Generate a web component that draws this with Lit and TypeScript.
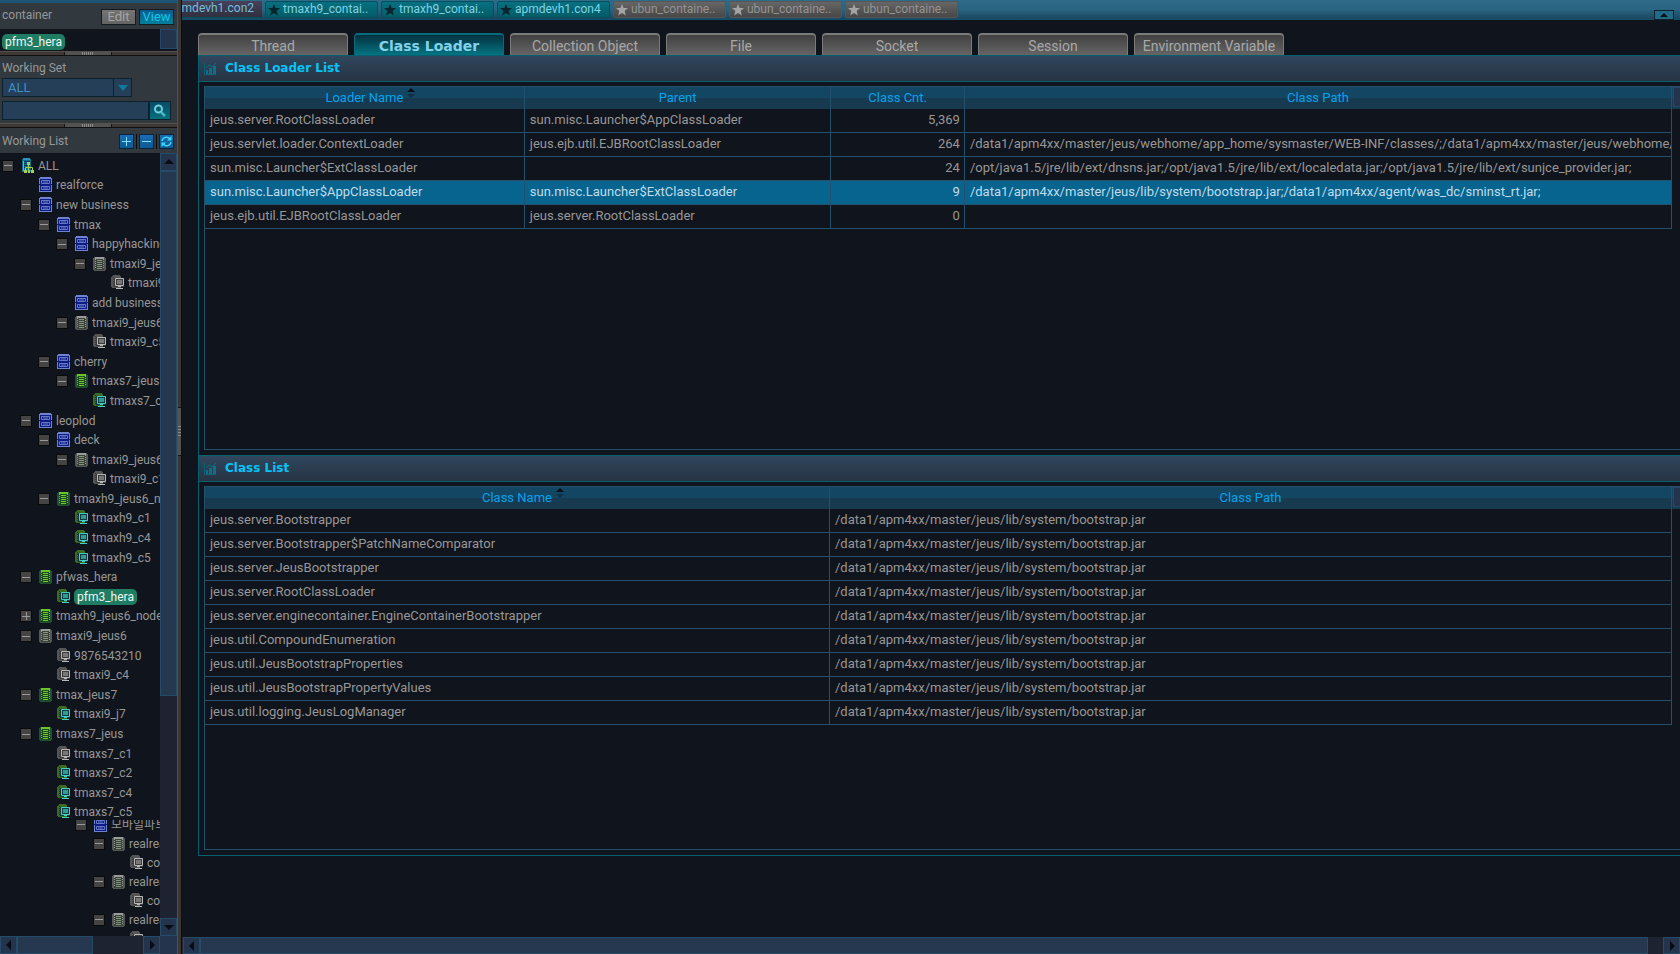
import { LitElement, html, css, svg } from 'lit';
import { customElement, state } from 'lit/decorators.js';
import { classMap } from 'lit/directives/class-map.js';

type Kind = 'root' | 'group' | 'node' | 'node-off' | 'con' | 'con-off';
type Row = [level: number, kind: Kind, name: string, toggle: string];

const TREE: Row[] = [
  [0, 'root', 'ALL', '-'],
  [1, 'group', 'realforce', ''],
  [1, 'group', 'new business', '-'],
  [2, 'group', 'tmax', '-'],
  [3, 'group', 'happyhacking', '-'],
  [4, 'node-off', 'tmaxi9_jeus6', '-'],
  [5, 'con-off', 'tmaxi9_c2', ''],
  [3, 'group', 'add business', ''],
  [3, 'node-off', 'tmaxi9_jeus6', '-'],
  [4, 'con-off', 'tmaxi9_c5', ''],
  [2, 'group', 'cherry', '-'],
  [3, 'node', 'tmaxs7_jeus', '-'],
  [4, 'con', 'tmaxs7_c1', ''],
  [1, 'group', 'leoplod', '-'],
  [2, 'group', 'deck', '-'],
  [3, 'node-off', 'tmaxi9_jeus6', '-'],
  [4, 'con-off', 'tmaxi9_c1', ''],
  [2, 'node', 'tmaxh9_jeus6_node', '-'],
  [3, 'con', 'tmaxh9_c1', ''],
  [3, 'con', 'tmaxh9_c4', ''],
  [3, 'con', 'tmaxh9_c5', ''],
  [1, 'node', 'pfwas_hera', '-'],
  [2, 'con', 'pfm3_hera', ''],
  [1, 'node', 'tmaxh9_jeus6_node', '+'],
  [1, 'node-off', 'tmaxi9_jeus6', '-'],
  [2, 'con-off', '9876543210', ''],
  [2, 'con-off', 'tmaxi9_c4', ''],
  [1, 'node', 'tmax_jeus7', '-'],
  [2, 'con', 'tmaxi9_j7', ''],
  [1, 'node', 'tmaxs7_jeus', '-'],
  [2, 'con-off', 'tmaxs7_c1', ''],
  [2, 'con', 'tmaxs7_c2', ''],
  [2, 'con', 'tmaxs7_c4', ''],
  [2, 'con', 'tmaxs7_c5', ''],
];

const MORE: Row[] = [
  [4, 'group', '모바일파트', '-'],
  [5, 'node-off', 'realreal', '-'],
  [6, 'con-off', 'con1', ''],
  [5, 'node-off', 'realreal', '-'],
  [6, 'con-off', 'con1', ''],
  [5, 'node-off', 'realreal', '-'],
  [6, 'con-off', 'con1', ''],
];

const OPEN: [string, string][] = [
  ['tmaxh9_contai..', 'on'],
  ['tmaxh9_contai..', 'on'],
  ['apmdevh1.con4', 'on'],
  ['ubun_containe..', 'off'],
  ['ubun_containe..', 'off'],
  ['ubun_containe..', 'off'],
];

const TABS = ['Thread', 'Class Loader', 'Collection Object', 'File', 'Socket', 'Session', 'Environment Variable'];

const LOADERS = [
  ['jeus.server.RootClassLoader', 'sun.misc.Launcher$AppClassLoader', '5,369', ''],
  ['jeus.servlet.loader.ContextLoader', 'jeus.ejb.util.EJBRootClassLoader', '264',
    '/data1/apm4xx/master/jeus/webhome/app_home/sysmaster/WEB-INF/classes/;/data1/apm4xx/master/jeus/webhome/'],
  ['sun.misc.Launcher$ExtClassLoader', '', '24',
    '/opt/java1.5/jre/lib/ext/dnsns.jar;/opt/java1.5/jre/lib/ext/localedata.jar;/opt/java1.5/jre/lib/ext/sunjce_provider.jar;'],
  ['sun.misc.Launcher$AppClassLoader', 'sun.misc.Launcher$ExtClassLoader', '9',
    '/data1/apm4xx/master/jeus/lib/system/bootstrap.jar;/data1/apm4xx/agent/was_dc/sminst_rt.jar;'],
  ['jeus.ejb.util.EJBRootClassLoader', 'jeus.server.RootClassLoader', '0', ''],
];

const BOOT = '/data1/apm4xx/master/jeus/lib/system/bootstrap.jar';
const CLASSES = [
  'jeus.server.Bootstrapper',
  'jeus.server.Bootstrapper$PatchNameComparator',
  'jeus.server.JeusBootstrapper',
  'jeus.server.RootClassLoader',
  'jeus.server.enginecontainer.EngineContainerBootstrapper',
  'jeus.util.CompoundEnumeration',
  'jeus.util.JeusBootstrapProperties',
  'jeus.util.JeusBootstrapPropertyValues',
  'jeus.util.logging.JeusLogManager',
];

const nodeIcon = (edge: string, top: string, body: string, line: string) => svg`
  <path d="M0 2h1V1h11v1h1v12h-1v1H1v-1H0z" fill=${edge}/>
  <path d="M2 1h9v13H2z" fill=${body}/><path d="M2 1h9v2H2z" fill=${top}/>
  <path d="M4 4.500h5M4 6.500h5M4 8.500h5M4 10.500h5M4 12.500h5" stroke=${line}/>
  <path d="M2.500 3v10M10.500 3v10" stroke=${top} stroke-dasharray="1 1"/>`;

const conIcon = (back: string, dark: string, frame: string, fill: string) => svg`
  <path d="M1 1h1V0h7v1h1v12H1v-1H0V2h1z" fill=${back}/>
  <path d="M2.500 2v10" stroke=${dark} stroke-dasharray="1 1"/>
  <path d="M3 3h10v9H3z" fill=${dark}/>
  <path d="M4.500 3.500h8v7h-8z" fill=${dark} stroke=${frame}/>
  <path d="M6 5h5v4H6z" fill=${fill}/>
  <path d="M7 11h3v1H7zM5 13h7v1H5z" fill=${frame}/>`;

const ICONS: Record<Kind, unknown> = {
  root: svg`
    <path d="M1 1h9v13H1z" fill="#0f6f92"/><path d="M2 0h7v2H2z" fill="#2c93b5"/>
    <path d="M2.500 3.500h6M2.500 5.500h6M2.500 7.500h4M2.500 9.500h3" stroke="#0b3550"/>
    <path d="M2.500 3v10" stroke="#59b9d4"/>
    <path d="M6 4h3v3H6zM3 12h3v3H3zM7 12h2v3H7zM10 12h3v3h-3z" fill="#a5d04f"/>
    <path d="M7.500 7v5M4.500 12V9.500h7V12" stroke="#a5d04f" fill="none"/>`,
  group: svg`
    <path d="M0 1h13v14H0z" fill="#0c1c84"/>
    <path d="M1 0h11v2H1zM0 1h1v6H0zM12 1h1v6h-1zM0 8h1v6H0zM12 8h1v6h-1zM0 14h13v1H0z" fill="#6f83cc"/>
    <path d="M2.500 3.500h8v3h-8zM4 5h5M2.500 9.500h8v3h-8zM4 11h5" stroke="#6478c4" fill="none"/>`,
  node: nodeIcon('#1f5232', '#6cc42a', '#1c4a1a', '#72c832'),
  'node-off': nodeIcon('#565656', '#9a9a9a', '#3a433a', '#84957e'),
  con: conIcon('#3c6a22', '#0f3c44', '#49cfc0', '#2f9c92'),
  'con-off': conIcon('#555555', '#3b3b3b', '#b8b8b8', '#777777'),
};

const icon = (k: Kind) => html`<svg class="ico" width="14" height="16" viewBox="0 0 14 16" aria-hidden="true">${ICONS[k]}</svg>`;
const star = html`<svg width="12" height="12" viewBox="0 0 12 12" aria-hidden="true"><path fill="currentColor" d="M6 0l1.600 4H12L8.600 7l1.300 4.500L6 9l-3.900 2.500L3.400 7 0 4h4.400z"/></svg>`;
const chart = html`<svg width="12" height="13" viewBox="0 0 12 13" aria-hidden="true">
  <path d="M0.500 1v11.500H12" stroke="#0a6076" fill="none"/>
  <path d="M2 8h2v4H2zM5 6h3v6H5zM9 4h3v8H9z" fill="#0a7288"/>
  <path d="M2 6l3-3 3 2 4-4" stroke="#0a6c82" fill="none"/></svg>`;
const sorter = html`<svg class="sort" width="8" height="10" viewBox="0 0 8 10" aria-hidden="true"><path d="M4 0l4 4H0z" fill="#0b1018"/><path d="M0 6h8L4 10z" fill="#123044"/></svg>`;
const TRI: Record<string, string> = {
  up: 'M5 2l5 5H0z', down: 'M0 3h10L5 8z', left: 'M7 0v10L2 5z', right: 'M3 0v10l5-5z',
};
const tri = (d: string) => html`<svg width="10" height="10" viewBox="0 0 10 10" aria-hidden="true"><path d=${TRI[d]} fill="#080c14"/></svg>`;

@customElement('app-root')
export class AppRoot extends LitElement {
  @state() private tab = 'Class Loader';
  @state() private loader = 3;

  static styles = css`
    :host {
      display: grid;
      grid-template-columns: 177px 5px minmax(0, 1fr);
      height: 100vh;
      overflow: hidden;
      background: #10141c;
      color: #979797;
      font: 12px/16px Roboto, "Noto Sans CJK KR", sans-serif;
    }
    * { box-sizing: border-box; }
    button, input, select { font: inherit; color: inherit; margin: 0; padding: 0; border: 0; border-radius: 0; }
    button { display: flex; align-items: center; justify-content: center; background: none; }
    ul { list-style: none; margin: 0; padding: 0; }
    h1, h2 { margin: 0; font: inherit; }
    svg { display: block; flex: none; }

    .side { display: flex; flex-direction: column; min-height: 0; border-top: 3px solid #1c5478; }
    .head { display: flex; align-items: center; height: 26px; padding: 0 3px 2px 2px; background: #31393f; gap: 3px; }
    .head h2 { flex: 1; }
    .mode { width: 35px; height: 16px; border: 1px solid #131a20; margin-top: 4px; font-size: 13px; line-height: 14px; background: linear-gradient(#747474, #646464); color: #a4a4a4; }
    .mode.on { background: linear-gradient(#0a5a8c, #05809a); color: #14c4ee; }
    .chosen { display: flex; justify-content: space-between; height: 22px; padding-left: 2px; }
    .pill { background: #1e7d62; color: #eef6f2; border-radius: 5px; padding: 0 3px; }
    .chosen .pill { align-self: end; margin-bottom: 1px; }
    .stub { width: 17px; height: 20px; background: #24344d; border: 1px solid #24486a; }
    .split { display: flex; justify-content: center; height: 5px; background: #3d3835; border-top: 1px solid #56504a; border-bottom: 1px solid #101010; padding-right: 2px; }
    .grip { width: 48px; background: repeating-linear-gradient(90deg, #8a8a8a 0 1px, #525252 1px 2px) center / 12px 3px no-repeat #525252; border: solid #151515; border-width: 0 1px; }
    .set { display: flex; flex-direction: column; gap: 4px; padding: 4px 6px 3px 2px; height: 67px; background: #31393f; }
    .set label { line-height: 16px; }
    .pick { display: flex; width: 130px; height: 19px; position: relative; margin-top: -2px; }
    .pick select { flex: 1; appearance: none; background: #243f57; border: 1px solid #0a2230; color: #3f90c8; font-size: 13px; padding-left: 5px; }
    .pick span { position: absolute; right: 0; top: 0; width: 19px; height: 19px; border-left: 1px solid #0a2230; pointer-events: none; display: grid; place-items: center; }
    .find { display: flex; height: 19px; }
    .find input { flex: 1; min-width: 0; background: #243f57; border: 1px solid #0a2230; }
    .find button { width: 22px; background: linear-gradient(#0b4a66, #04707c); border: 1px solid #0a2230; }
    .list-head { height: 25px; padding: 1px 3px 0 2px; gap: 2px; }
    .tool { width: 15px; height: 15px; background: linear-gradient(#1a6cb4, #0c5a92); border: 1px solid #0a2440; }
    .bar { width: 1px; height: 15px; background: #0c0c0c; }

    .body { flex: 1; min-height: 0; display: grid; grid-template-columns: minmax(0, 1fr) 17px; grid-template-rows: minmax(0, 1fr) 18px; }
    .tree { display: flex; flex-direction: column; min-height: 0; overflow: hidden; }
    .top-list { flex: 1; min-height: 0; display: flex; flex-direction: column; overflow: hidden; padding-top: 3px; }
    .top-list li { flex: 1 0 19px; }
    .top-list li:last-child { margin-bottom: -2px; }
    .more { flex: 0 0 116px; overflow: hidden; padding-left: 1px; }
    .more li { height: 19px; }
    .more li:first-child { margin-top: -5px; }
    li { display: flex; align-items: center; white-space: nowrap; }
    .exp { flex: none; width: 12px; height: 12px; margin-right: 7px; }
    button.exp { background: linear-gradient(#999, #999) center / 8px 1px no-repeat #444; border: 1px solid #0a0a0a; }
    button.exp.plus { background: linear-gradient(#999, #999) center / 8px 1px no-repeat, linear-gradient(#999, #999) center / 1px 8px no-repeat #444; }
    .ico { margin-right: 3px; }
    .vs { display: flex; flex-direction: column; background: #1e2331; }
    .hs { display: flex; background: #1e2331; }
    .sb { flex: none; width: 17px; height: 18px; background: #24344d; border: 1px solid #244c68; }
    .th { background: #26384f; border: 1px solid #244c68; }
    .vs .th { flex: 0 0 auto; height: 67%; }
    .vs .sb:last-child { margin-top: auto; }
    .side .hs .th { width: 76px; }
    .side .hs .sb:last-child { margin-left: auto; }
    .corner { background: #24344d; }

    .edge { background: #3b3632; border-left: 1px solid #56504a; border-right: 1px solid #0c0e12; display: grid; align-items: center; padding-bottom: 92px; }
    .edge span { height: 49px; background: repeating-linear-gradient(#888 0 1px, #525252 1px 3px) center / 3px 10px no-repeat #525252; border: solid #151515; border-width: 1px 0; }

    .main { display: flex; flex-direction: column; min-width: 0; min-height: 0; }
    .strip { display: flex; gap: 3px; flex: none; height: 20px; border-bottom: 1px solid #12506c; background: linear-gradient(#2e6c8a, #296480 50%, #1b4660); }
    .open { width: 113px; height: 17px; margin-top: 1px; padding: 0 0 2px 2px; justify-content: flex-start; gap: 3px; border: 1px solid #04505c; border-radius: 2px; background: linear-gradient(#087080, #045c66); color: #7fd4e4; white-space: nowrap; }
    .open svg { color: #0a2530; margin-top: 2px; }
    .open.off { background: linear-gradient(#666, #474747); border-color: #575757; color: #949494; }
    .open.off svg { color: #a4a4a4; }
    .open.cut { width: 80px; overflow: hidden; justify-content: flex-end; padding-right: 8px; background: linear-gradient(#46415a, #30303f); border-width: 0 0 1px; color: #74bede; border-radius: 0; }
    .fold { width: 20px; height: 10px; margin: 10px 6px 0 auto; border: 1px solid #0b2430; background: #226a86; }

    .tabs { display: flex; gap: 6px; padding: 13px 16px 0; flex: none; }
    .tab { width: 150px; height: 22px; font-size: 14px; padding-top: 2px; color: #a8a8a8; white-space: nowrap; border: 1px solid #7a7a78; border-width: 2px 1px 0; border-radius: 4px 4px 0 0; background: linear-gradient(#414141, #656565); }
    .tab.on { font: bold 14px "DejaVu Sans", sans-serif; color: #83d2ea; border-color: #046a7c; background: linear-gradient(#04303f, #047482); }

    .panel { flex: 1; min-height: 0; display: flex; flex-direction: column; margin: 0 0 81px 16px; border-left: 1px solid #045f6e; border-bottom: 1px solid #045f6e; }
    section { flex: 1; min-height: 0; display: flex; flex-direction: column; }
    .title { flex: none; display: flex; align-items: center; gap: 9px; height: 27px; padding: 0 5px 2px; border: solid #045f6e; border-width: 1px 0; background: linear-gradient(#30475d, #263343); color: #06c4f8; font: bold 12px/16px "DejaVu Sans", sans-serif; }
    .title svg { margin-top: 2px; }
    .box { flex: 1; min-height: 0; display: flex; align-items: start; gap: 1px; margin: 4px 0 5px 5px; border: solid #24506c; border-width: 1px 0 1px 1px; background: linear-gradient(#124662 11px, #173a50 11px) top / 100% 22px no-repeat; font-size: 13px; }
    .box .stub { width: 7px; flex: none; border-right: 0; }
    table { flex: 1; width: 100%; min-width: 0; table-layout: fixed; border-collapse: separate; border-spacing: 0; }
    th, td { border-right: 1px solid #24506c; padding: 0 4px 2px 5px; overflow: hidden; white-space: nowrap; line-height: 16px; text-align: left; font-weight: normal; }
    th { height: 22px; padding: 0; color: #06a2ee; text-align: center; }
    td { height: 24px; border-bottom: 1px solid #24506c; }
    tr > :last-child { padding-right: 0; }
    .sort { display: inline-block; margin: -6px -12px 0 4px; vertical-align: 4px; }
    td.num { text-align: right; }
    .sel td { background: #06648f; color: #c0dcea; }
    .c1 { width: 21.8%; }
    .c2 { width: 20.9%; }
    .c3 { width: 9.1%; }
    .half { width: 42.6%; }
    .main > .hs { flex: none; padding-left: 1px; }
    .main > .hs .th { flex: 1; margin-right: 15px; }
    .main .sb, .main > .hs .th { height: 17px; }
  `;

  private row([level, kind, name, toggle]: Row) {
    return html`<li style="padding-left:${2 + level * 18}px">
      ${toggle
        ? html`<button class=${classMap({ exp: true, plus: toggle === '+' })} aria-label="Toggle ${name}"></button>`
        : html`<span class="exp"></span>`}
      ${icon(kind)}<span class=${classMap({ pill: name === 'pfm3_hera' })}>${name}</span>
    </li>`;
  }

  private arrow(d: string) {
    return html`<button class="sb" aria-label="Scroll ${d}">${tri(d)}</button>`;
  }

  render() {
    return html`
      <aside class="side">
        <div class="head"><h2>container</h2><button class="mode">Edit</button><button class="mode on">View</button></div>
        <div class="chosen"><span class="pill">pfm3_hera</span><span class="stub"></span></div>
        <div class="split"><span class="grip"></span></div>
        <div class="set">
          <label for="ws">Working Set</label>
          <div class="pick">
            <select id="ws"><option>ALL</option></select>
            <span><svg width="10" height="6" viewBox="0 0 10 6"><path d="M0 0h10L5 6z" fill="#0e7c98"/></svg></span>
          </div>
          <div class="find">
            <input type="text" aria-label="Search working list" />
            <button aria-label="Search"><svg width="14" height="14" viewBox="0 0 14 14"><circle cx="5.500" cy="5" r="3.500" fill="none" stroke="#6fd0dc" stroke-width="2"/><path d="M8 8l4 4" stroke="#45b4c4" stroke-width="2.500"/></svg></button>
          </div>
        </div>
        <div class="split"><span class="grip"></span></div>
        <div class="head list-head">
          <h2>Working List</h2>
          <button class="tool" aria-label="Expand all"><svg width="9" height="9" viewBox="0 0 9 9"><path d="M4.500 0v9M0 4.500h9" stroke="#7fe0ff"/></svg></button>
          <span class="bar"></span>
          <button class="tool" aria-label="Collapse all"><svg width="9" height="9" viewBox="0 0 9 9"><path d="M0 4.500h9" stroke="#7fe0ff"/></svg></button>
          <span class="bar"></span>
          <button class="tool" aria-label="Refresh"><svg width="11" height="11" viewBox="0 0 11 11"><path d="M1 5a4.500 4.500 0 0 1 8-2M10 6a4.500 4.500 0 0 1-8 2" fill="none" stroke="#3fd8f4" stroke-width="1.500"/><path d="M10.500 0v4.500H6zM.5 11V6.500H5z" fill="#3fd8f4"/></svg></button>
        </div>
        <div class="body">
          <div class="tree">
            <ul class="top-list">${TREE.map((r) => this.row(r))}</ul>
            <ul class="more">${MORE.map((r) => this.row(r))}</ul>
          </div>
          <div class="vs">${this.arrow('up')}<div class="th"></div>${this.arrow('down')}</div>
          <div class="hs">${this.arrow('left')}<div class="th"></div>${this.arrow('right')}</div>
          <div class="corner"></div>
        </div>
      </aside>
      <div class="edge"><span></span></div>
      <main class="main">
        <nav class="strip" aria-label="Open containers">
          <button class="open cut">apmdevh1.con2</button>
          ${OPEN.map(([n, c]) => html`<button class="open ${c}">${star}${n}</button>`)}
          <button class="fold" aria-label="Fold"><svg width="8" height="4" viewBox="0 0 8 4"><path d="M4 0l4 4H0z" fill="#06141c"/></svg></button>
        </nav>
        <div class="tabs" role="tablist">
          ${TABS.map((t) => html`<button role="tab" class=${classMap({ tab: true, on: t === this.tab })}
            aria-selected=${t === this.tab} @click=${() => (this.tab = t)}>${t}</button>`)}
        </div>
        <div class="panel">
          <section>
            <h2 class="title">${chart}Class Loader List</h2>
            <div class="box">
              <table>
                <thead><tr><th class="c1">Loader Name${sorter}</th><th class="c2">Parent</th><th class="c3">Class Cnt.</th><th>Class Path</th></tr></thead>
                <tbody>${LOADERS.map((r, i) => html`<tr class=${classMap({ sel: i === this.loader })} @click=${() => (this.loader = i)}>
                  <td>${r[0]}</td><td>${r[1]}</td><td class="num">${r[2]}</td><td>${r[3]}</td></tr>`)}</tbody>
              </table>
              <span class="stub"></span>
            </div>
          </section>
          <section>
            <h2 class="title">${chart}Class List</h2>
            <div class="box">
              <table>
                <thead><tr><th class="half">Class Name${sorter}</th><th>Class Path</th></tr></thead>
                <tbody>${CLASSES.map((c) => html`<tr><td>${c}</td><td>${BOOT}</td></tr>`)}</tbody>
              </table>
              <span class="stub"></span>
            </div>
          </section>
        </div>
        <div class="hs">${this.arrow('left')}<div class="th"></div>${this.arrow('right')}</div>
      </main>
    `;
  }
}
